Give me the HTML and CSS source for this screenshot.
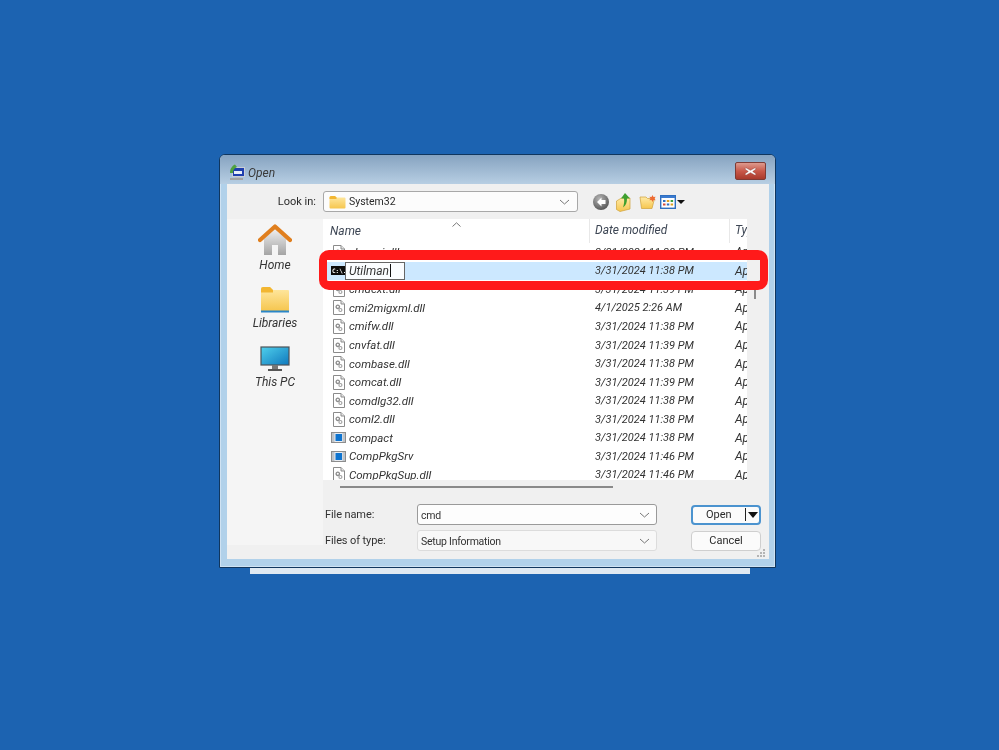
FILE: index.html
```html
<!DOCTYPE html>
<html lang="en">
<head>
<meta charset="utf-8">
<title>Open</title>
<link rel="stylesheet" href="styles.css">
</head>
<body>
<svg class="defs" width="0" height="0" aria-hidden="true">
  <defs>
    <linearGradient id="gFolder" x1="0" y1="0" x2="0" y2="1"><stop offset="0" stop-color="#ffeaa6"/><stop offset="1" stop-color="#f6c64e"/></linearGradient>
    <linearGradient id="gHome" x1="0" y1="0" x2="0" y2="1"><stop offset="0" stop-color="#efefef"/><stop offset="1" stop-color="#a4a4a4"/></linearGradient>
    <linearGradient id="gScreen" x1="0" y1="0" x2="1" y2="1"><stop offset="0" stop-color="#4fd0ec"/><stop offset="1" stop-color="#0f78bd"/></linearGradient>
    <radialGradient id="gBack" cx=".4" cy=".3" r=".8"><stop offset="0" stop-color="#b5b5b5"/><stop offset="1" stop-color="#4d4d4d"/></radialGradient>
    <symbol id="dll" viewBox="0 0 12 15">
      <path d="M.5.5h7.500l3.500 3.500v10.500h-11z" fill="#fff" stroke="#8b8b8b"/>
      <path d="M8 .5v3.500h3.500" fill="#e6e6e6" stroke="#8b8b8b"/>
      <circle cx="4.800" cy="6.800" r="1.700" fill="none" stroke="#8a8a8a" stroke-width="1.300"/>
      <circle cx="7.400" cy="10" r="1.500" fill="none" stroke="#a3a3a3" stroke-width="1.200"/>
    </symbol>
    <symbol id="exe" viewBox="0 0 15 11">
      <rect x=".5" y=".5" width="14" height="10" fill="#e9edf2" stroke="#8d8d8d"/>
      <rect x="1" y="1" width="2.500" height="9" fill="#bfc4c9"/>
      <rect x="11.500" y="1" width="2.500" height="9" fill="#bfc4c9"/>
      <rect x="4.500" y="2" width="6.500" height="7" fill="#0f74cf"/>
    </symbol>
  </defs>
</svg>

<main class="desktop">
  <section class="window">
    <header class="titlebar">
      <svg class="title-icon" width="16" height="16" viewBox="0 0 16 16">
        <path d="M1 14h13v2H1z" fill="#a3a3a3"/>
        <path d="M6 12h5v2H6z" fill="#bdbdbd"/>
        <rect x="3.500" y="3.500" width="12" height="9" fill="#1f3fae" stroke="#c9ced6"/>
        <path d="M5 7h8v3H5z" fill="#e8eef8"/>
        <path d="M1 9C1 4.500 3 2 6 .5L8 3C5.500 4 4 6 4 9z" fill="#4fa23f"/>
      </svg>
      <span class="title-text">Open</span>
      <button class="close" type="button" aria-label="Close">
        <svg width="13" height="9" viewBox="0 0 13 9"><path d="M2 .8l4.500 2.500L11 .8l1.200 1.200-3.500 2.500 3.500 2.500L11 8.200 6.500 5.700 2 8.200.8 7l3.500-2.500L.8 2z" fill="#fff" stroke="#7d2f27" stroke-width=".4"/></svg>
      </button>
    </header>

    <div class="client">
      <div class="toolbar">
        <span class="lookin-label">Look in:</span>
        <div class="combo lookin">
          <svg class="folder-small" width="17" height="14" viewBox="0 0 17 14"><path d="M.5 2.500q0-1.500 1.500-1.500h4l1.500 1.500h8q1 0 1 1v9q0 1-1 1h-14q-1 0-1-1z" fill="url(#gFolder)"/><path d="M.5 2.500q0-1.500 1.500-1.500h4l1.500 1.500v1.500h-7z" fill="#f2b632"/></svg>
          <span>System32</span>
          <svg class="chev" width="11" height="6" viewBox="0 0 11 6"><path d="M1 1l4.500 4L10 1" fill="none" stroke="#777"/></svg>
        </div>
        <div class="tools">
          <svg width="18" height="18" viewBox="0 0 18 18"><circle cx="9" cy="9" r="8" fill="url(#gBack)"/><path d="M9.500 4.500L5 9l4.500 4.500V11h4V7h-4z" fill="#fff"/></svg>
          <svg class="tool-up" width="18" height="20" viewBox="0 0 18 20"><path d="M1.500 9l5-3h8.500v11l-10 2.500-3.500-2z" fill="url(#gFolder)" stroke="#cfa13a" stroke-width=".7"/><path d="M10 1l5 5.500h-3c0 4-1 7-4 9 1-3 1.500-6 1-9H6z" fill="#3f9f2f"/></svg>
          <svg width="18" height="16" viewBox="0 0 18 16"><path d="M1 3h6l1.500 1.500h7L13 14.500H2.500z" fill="url(#gFolder)" stroke="#cfa13a" stroke-width=".7"/><path d="M13.500 1l1 2 2.200-.3-1.300 1.800 1.300 1.800-2.200-.3-1 2-1-2-2.200.3 1.300-1.800L10.300 2.700l2.200.3z" fill="#ee6b33"/></svg>
          <span class="viewbtn">
            <svg width="16" height="14" viewBox="0 0 16 14"><rect x=".7" y=".7" width="14.600" height="12.600" fill="#fff" stroke="#2f6fc0" stroke-width="1.400"/><rect x="1" y="1" width="14" height="2" fill="#3b7bd0"/><path d="M3 5h2.500v2H3z" fill="#2f6fc0"/><path d="M6.800 5h2.500v2H6.800z" fill="#e0a020"/><path d="M10.600 5h2.500v2h-2.500z" fill="#3fa03f"/><path d="M3 8.500h2.500v2H3z" fill="#d24a3a"/><path d="M6.800 8.500h2.500v2H6.800z" fill="#2f6fc0"/><path d="M10.600 8.500h2.500v2h-2.500z" fill="#e0a020"/></svg>
            <i class="caret"></i>
          </span>
        </div>
      </div>

      <div class="workarea">
        <nav class="places">
          <a class="place">
            <svg width="34" height="32" viewBox="0 0 34 32"><path d="M6 15L17 5l11 10v16H20V21h-6v10H6z" fill="url(#gHome)"/><path d="M2 16L17 2.500 32 16" fill="none" stroke="#e07f1e" stroke-width="4.200" stroke-linecap="round" stroke-linejoin="round"/></svg>
            <span>Home</span>
          </a>
          <a class="place libraries">
            <svg width="30" height="27" viewBox="0 0 30 27"><path d="M1 3q0-2 2-2h7l3 3h15q1 0 1 1v20H1z" fill="url(#gFolder)"/><path d="M1 3q0-2 2-2h7l3 3v2.500H1z" fill="#f2b632"/><rect x="1" y="24.500" width="28" height="2" fill="#2a86c8"/></svg>
            <span>Libraries</span>
          </a>
          <a class="place pc">
            <svg width="30" height="26" viewBox="0 0 30 26"><rect x="1" y="1" width="28" height="18" fill="url(#gScreen)" stroke="#4d5358" stroke-width="1.200"/><rect x="12" y="19" width="6" height="4" fill="#777"/><rect x="8" y="23" width="14" height="2" fill="#555"/></svg>
            <span>This PC</span>
          </a>
        </nav>

        <div class="main">
          <div class="list-wrap">
            <div class="list">
              <div class="list-head">
                <span class="col-name">Name<svg class="sort" width="9" height="5" viewBox="0 0 9 5"><path d="M.5 4.500L4.500.8l4 3.700" fill="none" stroke="#777"/></svg></span>
                <span class="col-date">Date modified</span>
                <span class="col-type">Type</span>
              </div>
              <div class="rows">
                <div class="row"><span class="col-name"><svg class="ic-dll"><use href="#dll"/></svg><span class="fname">clusapi.dll</span></span><span class="col-date">3/31/2024 11:38 PM</span><span class="col-type">Application</span></div>
                <div class="row selected"><span class="col-name"><svg class="ic-cmd" width="14" height="9" viewBox="0 0 14 9"><rect width="14" height="9" fill="#0c0c0c"/><text x="1" y="7" class="cmd-glyph">C:\.</text></svg><span class="rename">Utilman<i class="text-caret"></i></span></span><span class="col-date">3/31/2024 11:38 PM</span><span class="col-type">Application</span></div>
                <div class="row"><span class="col-name"><svg class="ic-dll"><use href="#dll"/></svg><span class="fname">cmdext.dll</span></span><span class="col-date">3/31/2024 11:39 PM</span><span class="col-type">Application</span></div>
                <div class="row"><span class="col-name"><svg class="ic-dll"><use href="#dll"/></svg><span class="fname">cmi2migxml.dll</span></span><span class="col-date">4/1/2025 2:26 AM</span><span class="col-type">Application</span></div>
                <div class="row"><span class="col-name"><svg class="ic-dll"><use href="#dll"/></svg><span class="fname">cmifw.dll</span></span><span class="col-date">3/31/2024 11:38 PM</span><span class="col-type">Application</span></div>
                <div class="row"><span class="col-name"><svg class="ic-dll"><use href="#dll"/></svg><span class="fname">cnvfat.dll</span></span><span class="col-date">3/31/2024 11:39 PM</span><span class="col-type">Application</span></div>
                <div class="row"><span class="col-name"><svg class="ic-dll"><use href="#dll"/></svg><span class="fname">combase.dll</span></span><span class="col-date">3/31/2024 11:38 PM</span><span class="col-type">Application</span></div>
                <div class="row"><span class="col-name"><svg class="ic-dll"><use href="#dll"/></svg><span class="fname">comcat.dll</span></span><span class="col-date">3/31/2024 11:39 PM</span><span class="col-type">Application</span></div>
                <div class="row"><span class="col-name"><svg class="ic-dll"><use href="#dll"/></svg><span class="fname">comdlg32.dll</span></span><span class="col-date">3/31/2024 11:38 PM</span><span class="col-type">Application</span></div>
                <div class="row"><span class="col-name"><svg class="ic-dll"><use href="#dll"/></svg><span class="fname">coml2.dll</span></span><span class="col-date">3/31/2024 11:38 PM</span><span class="col-type">Application</span></div>
                <div class="row"><span class="col-name"><svg class="ic-exe"><use href="#exe"/></svg><span class="fname">compact</span></span><span class="col-date">3/31/2024 11:38 PM</span><span class="col-type">Application</span></div>
                <div class="row"><span class="col-name"><svg class="ic-exe"><use href="#exe"/></svg><span class="fname">CompPkgSrv</span></span><span class="col-date">3/31/2024 11:46 PM</span><span class="col-type">Application</span></div>
                <div class="row"><span class="col-name"><svg class="ic-dll"><use href="#dll"/></svg><span class="fname">CompPkgSup.dll</span></span><span class="col-date">3/31/2024 11:46 PM</span><span class="col-type">Application</span></div>
              </div>
            </div>
            <div class="vscroll"></div>
          </div>
          <div class="hscroll"></div>

          <div class="form">
            <div class="form-row">
              <label class="form-label">File name:</label>
              <div class="field active"><span>cmd</span><svg class="chev" width="11" height="6" viewBox="0 0 11 6"><path d="M1 1l4.500 4L10 1" fill="none" stroke="#777"/></svg></div>
              <button class="btn primary" type="button"><span class="btn-text">Open</span><span class="split"><i class="caret"></i></span></button>
            </div>
            <div class="form-row">
              <label class="form-label">Files of type:</label>
              <div class="field"><span>Setup Information</span><svg class="chev" width="11" height="6" viewBox="0 0 11 6"><path d="M1 1l4.500 4L10 1" fill="none" stroke="#777"/></svg></div>
              <button class="btn" type="button"><span class="btn-text">Cancel</span></button>
            </div>
          </div>
        </div>
      </div>
      <svg class="grip" width="10" height="10" viewBox="0 0 10 10"><path d="M7 1h2v2H7zM4 4h2v2H4zM7 4h2v2H7zM1 7h2v2H1zM4 7h2v2H4zM7 7h2v2H7z" fill="#b4b4b4"/></svg>
    </div>
    <div class="highlight"></div>
  </section>
  <div class="under-window"></div>
</main>
</body>
</html>
```

FILE: styles.css
```css
* { box-sizing: border-box; }
html, body { margin: 0; padding: 0; height: 100%; }
body { background: #1c63b1; font-family: "Roboto", "Liberation Sans", sans-serif; font-size: 11px; color: #2b2b2b; overflow: hidden; }
.defs { position: absolute; }
.desktop { padding: 154px 0 0 219px; }

.window { position: relative; width: 557px; height: 414px; border: 1px solid #10365e; border-radius: 6px 6px 0 0; background: #b1d1ea; padding: 0 6px 7px 7px; box-shadow: inset 0 0 0 1px #cfe2f2; filter: blur(.3px); }
.titlebar { height: 29px; margin: 0 -6px 0 -7px; padding: 0 9px 0 9px; display: flex; align-items: center; gap: 3px; border-radius: 5px 5px 0 0; background: linear-gradient(#86a3c0, #b7cee3); }
.title-icon { margin-top: 5px; }
.title-text { font-size: 12px; font-style: italic; color: #3a3a3a; margin-top: 6px; }
.close { margin-left: auto; margin-top: 3px; width: 31px; height: 18px; padding: 0; border: 1px solid #7e3b35; border-radius: 2px; background: linear-gradient(#dd9a8e, #c9594a 50%, #a93a2c); display: flex; align-items: center; justify-content: center; }

.client { position: relative; height: 375px; background: #f0f0f0; display: flex; flex-direction: column; }
.toolbar { height: 35px; display: flex; align-items: center; flex: none; }
.lookin-label { width: 89px; text-align: right; margin-right: 7px; }
.combo { width: 255px; height: 21px; border: 1px solid #a8a8a8; border-radius: 3px; background: #fcfcfc; display: flex; align-items: center; padding: 0 7px 0 5px; font-size: 10.5px; }
.folder-small { margin-right: 3px; }
.chev { margin-left: auto; flex: none; }
.tools { display: flex; align-items: center; margin-left: 14px; gap: 6px; }
.tool-up { margin-left: -1px; }
.viewbtn { display: flex; align-items: center; gap: 1px; margin-left: -3px; }
.caret { display: block; width: 0; height: 0; border-left: 4px solid transparent; border-right: 4px solid transparent; border-top: 4px solid #111; }

.workarea { display: flex; flex: 1; min-height: 0; }
.places { width: 96px; height: 326px; background: #f5f5f5; display: flex; flex-direction: column; align-items: center; padding: 5px 0 0 0; flex: none; font-size: 12px; }
.place { display: flex; flex-direction: column; align-items: center; color: #333; font-style: italic; line-height: 14px; }
.place svg { display: block; }
.place span { margin-top: 2px; }
.libraries { margin-top: 14px; }
.libraries span { margin-top: 3px; }
.pc { margin-top: 16px; }
.pc span { margin-top: 3px; }

.main { flex: 1; min-width: 0; }
.list-wrap { display: flex; height: 261px; }
.list { width: 424px; height: 261px; background: #fff; overflow: hidden; display: flex; flex-direction: column; }
.list-head { height: 24px; display: grid; grid-template-columns: 266px 140px 18px; align-items: center; flex: none; color: #3d4654; font-style: italic; font-size: 12px; }
.list-head .col-name { position: relative; padding-left: 7px; }
.list-head .col-date { height: 24px; line-height: 22px; padding-left: 5px; border-left: 1px solid #e8e8e8; }
.list-head .col-type { height: 24px; line-height: 22px; padding-left: 5px; border-left: 1px solid #e8e8e8; overflow: hidden; white-space: nowrap; }
.sort { position: absolute; left: 129px; top: -2px; }
.rows { flex: 1; overflow: hidden; }
.row { height: 18.55px; display: grid; grid-template-columns: 266px 140px 18px; align-items: center; font-style: italic; color: #333; }
.row .col-name { display: flex; align-items: center; min-width: 0; font-size: 11.5px; }
.row .col-date { padding-left: 6px; white-space: nowrap; font-size: 11px; }
.row .col-type { padding-left: 6px; overflow: hidden; white-space: nowrap; font-size: 12px; }
.selected { background: #cce8ff; }
.ic-dll { width: 12px; height: 15px; margin-left: 10px; margin-right: 4px; flex: none; }
.ic-exe { width: 15px; height: 11px; margin-left: 8px; margin-right: 3px; flex: none; }
.ic-cmd { margin-left: 8px; flex: none; }
.cmd-glyph { font-family: "DejaVu Sans Mono", monospace; font-size: 6px; font-weight: bold; font-style: normal; fill: #fff; }
.rename { position: relative; width: 60px; height: 18px; background: #fbfdff; border: 1px solid #666; padding-left: 3px; display: flex; align-items: center; font-size: 12px; }
.text-caret { width: 1px; height: 13px; background: #111; margin-left: 1px; }

.vscroll { width: 2px; height: 17px; margin: 63px 0 0 7px; background: #8a8a8a; }
.hscroll { width: 273px; height: 2px; margin: 6px 0 0 17px; background: #8a8a8a; }

.form { margin-top: 16px; display: flex; flex-direction: column; gap: 5px; padding-left: 2px; }
.form-row { display: flex; align-items: center; height: 21px; }
.form-label { width: 92px; color: #333; letter-spacing: -.1px; }
.field { width: 240px; height: 21px; border: 1px solid #9a9a9a; border-radius: 3px; background: #fdfdfd; display: flex; align-items: center; padding: 1px 6px 0 3px; color: #333; font-size: 10.5px; letter-spacing: -.25px; }
.form-row + .form-row .field { border-color: #dcdcdc; background: #f8f8f8; }
.btn { margin-left: 34px; width: 70px; height: 20px; padding: 0; border: 1px solid #cfcfcf; border-radius: 4px; background: #fbfbfb; font: inherit; color: #2b2b2b; display: flex; align-items: center; justify-content: center; }
.primary { border: 2px solid #4b93cf; position: relative; justify-content: flex-start; }
.primary .btn-text { margin-left: 13px; }
.split { margin-left: auto; display: flex; align-items: center; height: 13px; border-left: 1px solid #222; padding: 0 1px 0 2px; }
.split .caret { border-left-width: 5px; border-right-width: 5px; border-top-width: 6px; }

.grip { position: absolute; right: 3px; bottom: 1px; }
.highlight { position: absolute; left: 99px; top: 95px; width: 449px; height: 40px; border-style: solid; border-color: #ff1a1a; border-width: 10px 8px 9px 8px; border-radius: 10px; }
.under-window { width: 500px; height: 6px; margin: 0 0 0 31px; background: #dfe9f2; }
```
